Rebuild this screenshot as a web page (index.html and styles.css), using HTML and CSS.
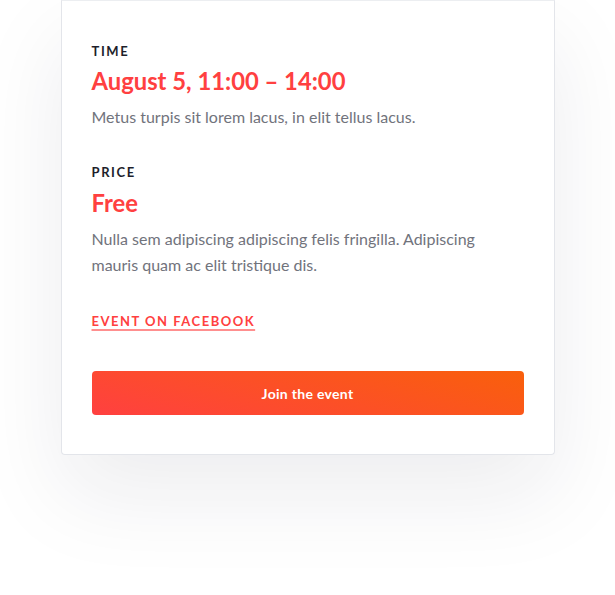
FILE: index.html
```html
<!DOCTYPE html>
<html lang="en">
<head>
<meta charset="utf-8">
<title>Event</title>
<link rel="stylesheet" href="styles.css">
</head>
<body>
<div class="card">
  <div class="label">Time</div>
  <h2 class="value">August 5, 11:00 – 14:00</h2>
  <p class="text">Metus turpis sit lorem lacus, in elit tellus lacus.</p>
  <div class="label label-gap">Price</div>
  <h2 class="value value-tight">Free</h2>
  <p class="text">Nulla sem adipiscing adipiscing felis fringilla. Adipiscing mauris quam ac elit tristique dis.</p>
  <a class="fb-link" href="#">Event on Facebook</a>
  <button class="join" type="button">Join the event</button>
</div>
</body>
</html>
```

FILE: styles.css
```css
html, body {
  margin: 0;
  padding: 0;
  background: #ffffff;
}
body {
  font-family: Lato, "Noto Sans", sans-serif;
  width: 615px;
  height: 595px;
  overflow: hidden;
}
.card {
  box-sizing: border-box;
  width: 494px;
  margin: 0 auto;
  padding: 40px 30px 39px;
  border: 1px solid #e3e5ea;
  border-top: 1px solid #eceef1;
  border-radius: 0 0 4px 4px;
  background: #ffffff;
  box-shadow: 0 40px 90px rgba(29, 31, 50, 0.08);
  display: flex;
  flex-direction: column;
  align-items: flex-start;
}
.label {
  font-size: 13px;
  line-height: 20px;
  font-weight: 700;
  letter-spacing: 1.6px;
  text-transform: uppercase;
  color: #1e1f2c;
}
.label-gap {
  margin-top: 32px;
}
.value {
  margin: 4px 0 0;
  font-size: 23.8px;
  line-height: 32px;
  font-weight: 700;
  color: #ff4040;
}
.value-tight {
  margin-top: 5px;
}
.text {
  margin: 7px 0 0;
  font-size: 16px;
  line-height: 26px;
  color: #71737c;
}
.fb-link {
  margin-top: 33px;
  font-size: 13px;
  line-height: 20px;
  font-weight: 700;
  letter-spacing: 1.5px;
  text-transform: uppercase;
  color: #ff4040;
  text-decoration: underline;
  text-decoration-color: #ff8f8f;
  text-decoration-thickness: 2px;
  text-underline-offset: 3px;
}
.join {
  margin-top: 40px;
  width: 100%;
  height: 44px;
  border: 0;
  border-radius: 4px;
  background: linear-gradient(15deg, #ff4040 0%, #f9600b 100%);
  color: #ffffff;
  font-family: Lato, "Noto Sans", sans-serif;
  font-size: 14px;
  font-weight: 700;
  letter-spacing: 0.3px;
  cursor: pointer;
}
```
